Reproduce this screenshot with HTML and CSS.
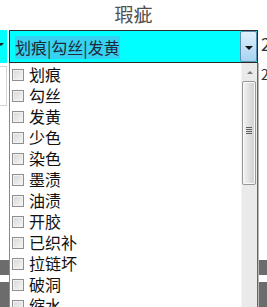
FILE: index.html
```html
<!DOCTYPE html>
<html lang="zh">
<head>
    <meta charset="UTF-8" />
    <title>瑕疵</title>
    <link rel="stylesheet" href="styles.css">
</head>
<body>
    <div class="page">
        <div class="title">瑕疵</div>

        <div class="combo-row">
            <div class="stub-left"><span class="stub-arrow"></span></div>
            <div class="combo">
                <span class="combo-value">划痕|勾丝|发黄</span>
                <span class="combo-btn"><span class="tri"></span></span>
            </div>
            <div class="stub-right">2</div>
        </div>

        <div class="next-row">
            <div class="stub-box"></div>
            <div class="stub-right small">2</div>
        </div>

        <div class="bar bar-a"></div>
        <div class="gap"></div>
        <div class="bar bar-b"></div>

        <!-- liste déroulante -->
        <div class="popup">
            <ul class="list">
                <li><span class="chk"></span>划痕</li>
                <li><span class="chk"></span>勾丝</li>
                <li><span class="chk"></span>发黄</li>
                <li><span class="chk"></span>少色</li>
                <li><span class="chk"></span>染色</li>
                <li><span class="chk"></span>墨渍</li>
                <li><span class="chk"></span>油渍</li>
                <li><span class="chk"></span>开胶</li>
                <li><span class="chk"></span>已织补</li>
                <li><span class="chk"></span>拉链坏</li>
                <li><span class="chk"></span>破洞</li>
                <li><span class="chk"></span>缩水</li>
            </ul>
            <div class="scrollbar">
                <div class="sb-up"><span class="sb-tri"></span></div>
                <div class="sb-thumb">
                    <span class="grip"></span>
                </div>
            </div>
        </div>
    </div>
</body>
</html>
```

FILE: styles.css
```css
* {
    box-sizing: border-box;
}

body {
    margin: 0;
    background: #ffffff;
    font-family: "Noto Sans CJK SC", "Noto Sans", sans-serif;
}

.page {
    position: relative;
    width: 267px;
    height: 307px;
    overflow: hidden;
}

.title {
    height: 30px;
    line-height: 28px;
    text-align: center;
    font-size: 19px;
    color: #4f4f4f;
}

.combo-row {
    display: flex;
    height: 33px;
}

.stub-left {
    position: relative;
    width: 9px;
    background: #00ffff;
    border-right: 2px solid #e8f4f4;
}

.stub-arrow {
    position: absolute;
    left: -2px;
    top: 13px;
    border-left: 3px solid transparent;
    border-right: 3px solid transparent;
    border-top: 3px solid #222;
}

.combo {
    display: flex;
    align-items: center;
    width: 249px;
    background: #00ffff;
    border: 1px solid #2b2b2b;
    padding-left: 5px;
}

.combo-value {
    margin-right: auto;
    margin-top: 1px;
    font-size: 16px;
    line-height: 23px;
    color: #1c2b3a;
    background: #36d2f2;
}

.combo-btn {
    display: flex;
    align-items: center;
    justify-content: center;
    width: 17px;
    height: 100%;
    background: linear-gradient(#e0f1fc, #a6d3f1);
    border: 1px solid #5f8fb3;
    border-radius: 2px;
}

.tri {
    margin-top: 2px;
    border-left: 4px solid transparent;
    border-right: 4px solid transparent;
    border-top: 4px solid #111;
}

.stub-right {
    flex: 1;
    padding-left: 3px;
    font-size: 17px;
    line-height: 28px;
    color: #333;
    overflow: hidden;
}

.next-row {
    display: flex;
    height: 197px;
}

.stub-box {
    width: 7px;
    margin-top: 3px;
    height: 40px;
    border: 1px solid #d4d4d4;
    border-left: none;
}

.stub-right.small {
    margin-left: 251px;
    font-size: 14px;
    line-height: 22px;
}

.bar {
    background: #6c6c6c;
}

.bar-a {
    height: 15px;
}

.gap {
    height: 7px;
}

.bar-b {
    height: 25px;
}

.popup {
    position: absolute;
    left: 9px;
    top: 63px;
    width: 249px;
    bottom: 0;
    display: flex;
    background: #ffffff;
    border-left: 1px solid #8a8a8a;
    border-right: 1px solid #666;
    box-shadow: 1px 0 0 #b8b8b8;
}

.list {
    flex: 1;
    list-style: none;
    margin: 0;
    padding: 1px 0 0 0;
    overflow: hidden;
}

.list li {
    display: flex;
    align-items: center;
    height: 21px;
    padding-left: 2px;
    font-size: 16px;
    line-height: 21px;
    color: #111;
}

.chk {
    width: 12px;
    height: 12px;
    margin-right: 5px;
    border: 1px solid #8e8f8f;
    background: linear-gradient(135deg, #d6d6d6, #f7f7f7);
    box-shadow: inset 0 0 0 1px #f2f2f2;
}

.scrollbar {
    width: 16px;
    background: #eaeaea;
    border-left: 1px solid #f3f3f3;
}

.sb-up {
    display: flex;
    justify-content: center;
    align-items: center;
    height: 18px;
}

.sb-tri {
    border-left: 3px solid transparent;
    border-right: 3px solid transparent;
    border-bottom: 3px solid #7a7a7a;
}

.sb-thumb {
    display: flex;
    align-items: center;
    justify-content: center;
    width: 14px;
    height: 104px;
    border: 1px solid #979797;
    border-radius: 2px;
    background: linear-gradient(90deg, #f4f4f4, #dcdcdc 60%, #d0d0d0);
    box-shadow: inset 0 0 0 1px #fafafa;
}

.grip {
    width: 6px;
    height: 7px;
    margin-top: -6px;
    background: repeating-linear-gradient(#5e5e5e 0 1px, transparent 1px 2px);
}
```
